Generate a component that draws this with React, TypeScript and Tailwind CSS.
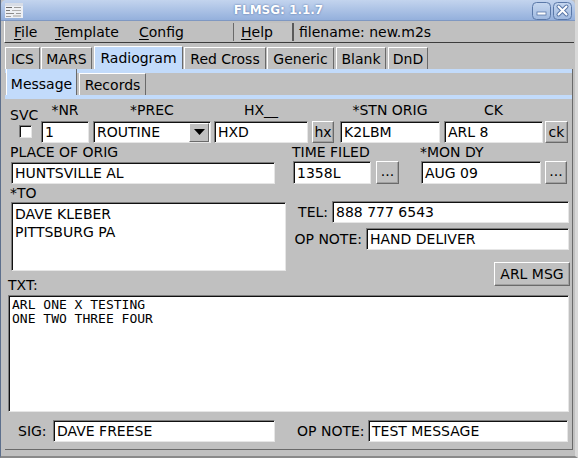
import React from "react";

const inputCls =
  "bg-white border border-t-[#7c7c7c] border-l-[#7c7c7c] border-b-[#e6e6e6] border-r-[#e6e6e6] shadow-[inset_1px_1px_0_#101010] flex pl-[3px] text-[14px] text-black whitespace-nowrap overflow-hidden";
const inputRow = "items-center leading-none";
const btnCls =
  "bg-[#c0c0c0] border border-t-white border-l-white border-b-[#6a6a6a] border-r-[#6a6a6a] shadow-[inset_-1px_-1px_0_#a0a0a0] flex items-center justify-center text-[14px] text-black leading-none";
const tabCls =
  "h-[22px] flex items-center justify-center text-[14px] leading-none border-t border-l border-r border-t-white border-l-white border-r-[#6a6a6a] bg-[#c0c0c0] text-black";
const tabSelCls =
  "h-[23px] flex items-center justify-center text-[14px] leading-none border-l border-r border-l-white border-r-[#6a6a6a] bg-[#c2dbfb] text-black";
const lbl = "text-[14px] leading-[17px] h-[17px] text-black whitespace-nowrap";

function AppIcon() {
  return (
    <svg width="18" height="15" viewBox="0 0 18 15">
      <rect x="0" y="0" width="18" height="15" fill="#eef0f4" />
      <rect x="0" y="0" width="18" height="3" fill="#d8dde6" />
      <rect x="1" y="4" width="6" height="1" fill="#6b6b6b" />
      <rect x="9" y="4" width="7" height="1" fill="#9a9a9a" />
      <rect x="1" y="7" width="4" height="1" fill="#7a7a7a" />
      <rect x="7" y="7" width="9" height="1" fill="#b0b0b0" />
      <rect x="1" y="10" width="8" height="1" fill="#8a8a8a" />
      <rect x="11" y="10" width="5" height="1" fill="#9a9a9a" />
      <rect x="1" y="13" width="5" height="1" fill="#a0a0a0" />
      <rect x="8" y="12" width="8" height="2" fill="#c8c8c8" />
    </svg>
  );
}

function WinBtn({ kind }: { kind: "min" | "close" }) {
  return (
    <svg width="19" height="18" viewBox="0 0 19 18">
      <defs>
        <linearGradient id={`g${kind}`} x1="0" y1="0" x2="0" y2="1">
          <stop offset="0" stopColor="#c6d7ef" />
          <stop offset="1" stopColor="#9fb9e0" />
        </linearGradient>
      </defs>
      <rect x="0.5" y="0.5" width="18" height="17" rx="4" fill={`url(#g${kind})`} stroke="#5a78a8" />
      {kind === "min" ? (
        <rect x="5" y="10" width="9" height="3" fill="#ffffff" stroke="#5a78a8" strokeWidth="0.8" />
      ) : (
        <g>
          <path d="M5.5 4.5 L13.5 12.5 M13.5 4.5 L5.5 12.5" stroke="#5a78a8" strokeWidth="4" strokeLinecap="round" />
          <path d="M5.5 4.5 L13.5 12.5 M13.5 4.5 L5.5 12.5" stroke="#ffffff" strokeWidth="2" strokeLinecap="round" />
        </g>
      )}
    </svg>
  );
}

export default function App() {
  return (
    <div className="w-[578px] h-[458px] bg-[#c0c0c0] font-['DejaVu_Sans',sans-serif] flex flex-col overflow-hidden border-l border-l-[#5d6f8c] border-r-[3px] border-r-[#d8d8d8] border-b-2 border-b-[#8a8a8a]">
      {/* Title bar */}
      <div className="h-[21px] shrink-0 flex items-center bg-gradient-to-b from-[#c3d4ee] to-[#94b0dc] border-b border-b-[#7f98c2] rounded-t-[5px]">
        <div className="ml-[4px] mt-[1px] flex">
          <AppIcon />
        </div>
        <div className="flex-1 flex justify-center text-white font-bold text-[12px] leading-none [text-shadow:0_0_2px_#46649a] pl-[2px]">
          FLMSG: 1.1.7
        </div>
        <div className="flex gap-[2px] mr-[3px] mt-[1px]">
          <WinBtn kind="min" />
          <WinBtn kind="close" />
        </div>
      </div>

      {/* Menu bar */}
      <div className="h-[22px] shrink-0 ml-[3px] mr-[1px] flex items-center border-l border-l-white border-b border-b-[#3c3c3c] text-[14px] leading-none text-black">
        <div className="w-[41px] ml-[9px]">
          <span className="underline underline-offset-2">F</span>ile
        </div>
        <div className="w-[84px]">
          <span className="underline underline-offset-2">T</span>emplate
        </div>
        <div className="w-[94px]">
          <span className="underline underline-offset-2">C</span>onfig
        </div>
        <div className="w-[61px] h-[18px] flex items-center pl-[7px] border-l border-l-[#6a6a6a] border-r-2 border-r-[#5a5a5a] bg-[#c4c4c4]">
          <span className="underline underline-offset-2">H</span>elp
        </div>
        <div className="ml-[5px]">filename: new.m2s</div>
      </div>

      {/* Tabs row 1 */}
      <div className="h-[26px] shrink-0 flex items-end">
        <div className={`${tabCls} ml-[4px] w-[35px]`}>ICS</div>
        <div className={`${tabCls} ml-[1px] w-[51px]`}>MARS</div>
        <div className={`${tabSelCls} ml-[2px] w-[89px] border-t border-t-white`}>Radiogram</div>
        <div className={`${tabCls} ml-[1px] w-[82px]`}>Red Cross</div>
        <div className={`${tabCls} ml-[1px] w-[67px]`}>Generic</div>
        <div className={`${tabCls} ml-[2px] w-[50px]`}>Blank</div>
        <div className={`${tabCls} ml-[2px] w-[40px]`}>DnD</div>
      </div>

      {/* Radiogram panel */}
      <div className="ml-[4px] w-[568px] flex-1 flex flex-col border-r border-r-[#6a6a6a] border-b border-b-[#6a6a6a]">
        <div className="h-[4px] bg-[#c2dbfb] shrink-0" />
        {/* Tabs row 2 */}
        <div className="h-[22px] shrink-0 flex items-end">
          <div className="h-[26px] -mt-[4px] self-end w-[71px] ml-[1px] bg-[#c2dbfb] border-l border-l-white border-r border-r-[#6a6a6a] flex items-center justify-center text-[14px] leading-none text-black pt-[4px]">
            Message
          </div>
          <div className={`${tabCls} ml-[2px] w-[67px] h-[21px]`}>Records</div>
        </div>
        <div className="h-[4px] bg-[#c2dbfb] shrink-0" />

        {/* Content */}
        <div className="flex-1 flex flex-col">
          {/* Row A */}
          <div className="mt-[5px] flex items-end h-[39px]">
            <div className="ml-[5px] w-[25px] flex flex-col h-[39px] justify-end">
              <div className={lbl}>SVC</div>
              <div className="ml-[9px] mt-[1px] mb-[5px] w-[13px] h-[13px] bg-white border border-t-[#7c7c7c] border-l-[#7c7c7c] border-b-[#e6e6e6] border-r-[#e6e6e6] shadow-[inset_1px_1px_0_#101010]" />
            </div>
            <div className="ml-[6px] w-[48px] flex flex-col">
              <div className={`${lbl} text-center -mt-[2px] mb-[2px]`}>*NR</div>
              <div className={`${inputCls} ${inputRow} h-[22px]`}>1</div>
            </div>
            <div className="ml-[4px] w-[118px] flex flex-col">
              <div className={`${lbl} text-center -mt-[2px] mb-[2px]`}>*PREC</div>
              <div className={`${inputCls} ${inputRow} h-[22px] pr-[1px]`}>
                <span className="flex-1">ROUTINE</span>
                <div className="w-[20px] h-[19px] bg-[#c0c0c0] border border-t-white border-l-white border-b-[#6a6a6a] border-r-[#6a6a6a] flex items-center justify-center">
                  <svg width="11" height="6" viewBox="0 0 11 6">
                    <path d="M0 0 L11 0 L5.5 6 Z" fill="#000" />
                  </svg>
                </div>
              </div>
            </div>
            <div className="ml-[3px] w-[94px] flex flex-col">
              <div className={`${lbl} text-center -mt-[2px] mb-[2px]`}>HX__</div>
              <div className={`${inputCls} ${inputRow} h-[22px]`}>HXD</div>
            </div>
            <div className={`${btnCls} ml-[4px] w-[22px] h-[22px]`}>hx</div>
            <div className="ml-[6px] w-[100px] flex flex-col">
              <div className={`${lbl} text-center -mt-[2px] mb-[2px]`}>*STN ORIG</div>
              <div className={`${inputCls} ${inputRow} h-[22px]`}>K2LBM</div>
            </div>
            <div className="ml-[4px] w-[99px] flex flex-col">
              <div className={`${lbl} text-center -mt-[2px] mb-[2px]`}>CK</div>
              <div className={`${inputCls} ${inputRow} h-[22px]`}>ARL 8</div>
            </div>
            <div className={`${btnCls} ml-[2px] w-[23px] h-[22px]`}>ck</div>
          </div>

          {/* Row B */}
          <div className="mt-[1px] flex items-end">
            <div className="ml-[6px] w-[264px] flex flex-col">
              <div className={`${lbl} -ml-[1px]`}>PLACE OF ORIG</div>
              <div className={`${inputCls} ${inputRow} h-[22px] mt-[1px]`}>HUNTSVILLE AL</div>
            </div>
            <div className="ml-[18px] w-[78px] flex flex-col">
              <div className={`${lbl} -ml-[1px]`}>TIME FILED</div>
              <div className={`${inputCls} ${inputRow} h-[23px]`}>1358L</div>
            </div>
            <div className={`${btnCls} ml-[5px] w-[23px] h-[23px] pb-[4px]`}>...</div>
            <div className="ml-[22px] w-[120px] flex flex-col">
              <div className={`${lbl} -ml-[1px]`}>*MON DY</div>
              <div className={`${inputCls} ${inputRow} h-[23px]`}>AUG 09</div>
            </div>
            <div className={`${btnCls} ml-[4px] w-[22px] h-[23px] pb-[4px]`}>...</div>
          </div>

          {/* Row C */}
          <div className="flex items-start">
            <div className="ml-[3px] w-[278px] flex flex-col">
              <div className={`${lbl} ml-[2px] mt-[1px]`}>*TO</div>
              <div className={`${inputCls} ml-[3px] w-[275px] h-[69px] flex-col items-start pt-[2px] leading-[18px]`}>
                <div>DAVE KLEBER</div>
                <div>PITTSBURG PA</div>
              </div>
              <div className={`${lbl} mt-[6px]`}>TXT:</div>
            </div>
            <div className="ml-[4px] w-[279px] flex flex-col items-end mt-[17px]">
              <div className="flex items-center">
                <div className={`${lbl} mr-[4px]`}>TEL:</div>
                <div className={`${inputCls} ${inputRow} w-[237px] h-[22px]`}>888 777 6543</div>
              </div>
              <div className="flex items-center mt-[5px]">
                <div className={`${lbl} mr-[4px]`}>OP NOTE:</div>
                <div className={`${inputCls} ${inputRow} w-[203px] h-[22px]`}>HAND DELIVER</div>
              </div>
              <div className={`${btnCls} mt-[12px] w-[76px] h-[24px] mr-[-1px]`}>ARL MSG</div>
            </div>
          </div>

          {/* TXT area */}
          <div className="ml-[3px] mt-[1px] w-[561px] h-[117px] bg-white border border-t-[#7c7c7c] border-l-[#7c7c7c] border-b-[#e6e6e6] border-r-[#e6e6e6] shadow-[inset_1px_1px_0_#101010] flex flex-col items-start pl-[3px] pt-[2px] font-['DejaVu_Sans_Mono',monospace] text-[13px] leading-[14px] text-black whitespace-pre overflow-hidden">
            <div>ARL ONE X TESTING</div>
            <div>ONE TWO THREE FOUR</div>
          </div>

          {/* Row E */}
          <div className="mt-[8px] flex items-center">
            <div className={`${lbl} ml-[13px] w-[31px]`}>SIG:</div>
            <div className={`${inputCls} ${inputRow} ml-[4px] w-[222px] h-[22px]`}>DAVE FREESE</div>
            <div className={`${lbl} ml-[22px] w-[68px]`}>OP NOTE:</div>
            <div className={`${inputCls} ${inputRow} ml-[3px] w-[200px] h-[22px]`}>TEST MESSAGE</div>
          </div>
        </div>
      </div>
      <div className="h-[6px] shrink-0" />
    </div>
  );
}
